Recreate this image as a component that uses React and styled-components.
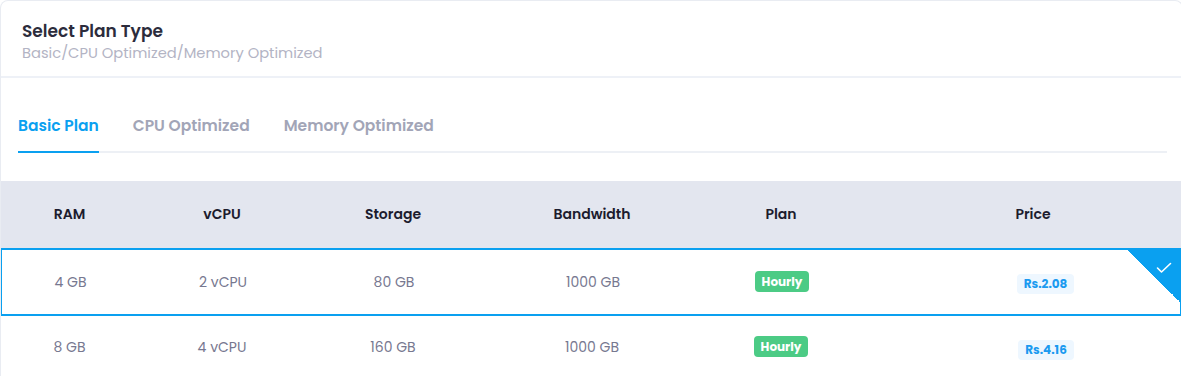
import React, { useState } from "react";
import styled, { createGlobalStyle } from "styled-components";

const GlobalStyle = createGlobalStyle`
  html, body { margin: 0; padding: 0; background: #ffffff; overflow: hidden; }
  body { font-family: "Poppins", "Open Sans", "Noto Sans", sans-serif; }
  * { box-sizing: border-box; }
`;

const Card = styled.section`
  width: calc(100% + 2px);
  background: #ffffff;
  border: 1px solid #e9ecf2;
  border-bottom: none;
  border-radius: 8px 8px 0 0;
  overflow: hidden;
`;

const Header = styled.header`
  padding: 18px 22px 13px 21px;
  border-bottom: 2px solid #eef1f7;
`;

const Title = styled.h2`
  margin: 0;
  font-size: 17px;
  line-height: 24px;
  font-weight: 600;
  color: #2c2c3c;
`;

const Subtitle = styled.p`
  margin: 0;
  font-size: 14.7px;
  line-height: 20px;
  font-weight: 400;
  color: #b3b4c4;
`;

const Body = styled.div`
  padding-top: 37px;
`;

const Tabs = styled.nav`
  display: flex;
  gap: 34px;
  margin: 0 15px 28px 17px;
  border-bottom: 2px solid #edf0f5;
`;

const Tab = styled.button`
  appearance: none;
  background: none;
  border: none;
  padding: 0 0 14px;
  margin-bottom: -2px;
  font-family: inherit;
  font-size: 15.5px;
  line-height: 22px;
  font-weight: 600;
  cursor: pointer;
  color: ${(p) => (p.$active ? "#0aa0f0" : "#a2a5b7")};
  border-bottom: 2px solid ${(p) => (p.$active ? "#0aa0f0" : "transparent")};
`;

const COLS = "137px 168px 174px 224px 154px 1fr";

const HeadRow = styled.div`
  display: grid;
  grid-template-columns: ${COLS};
  height: 67px;
  align-items: center;
  background: #e3e6ef;
`;

const HeadCell = styled.div`
  text-align: center;
  font-size: 14px;
  font-weight: 600;
  color: #1c1c2e;
  padding-left: ${(p) => (p.$last ? "26px" : "0")};
`;

const Row = styled.div`
  position: relative;
  display: grid;
  grid-template-columns: ${COLS};
  align-items: center;
  height: ${(p) => (p.$selected ? "68px" : "63px")};
  border: ${(p) => (p.$selected ? "2px solid #0aa0f0" : "none")};
  border-left: ${(p) => (p.$selected ? "2px solid #0aa0f0" : "1px solid #e8ebf1")};
  border-bottom: ${(p) => (p.$selected ? "2px solid #0aa0f0" : "1px solid #eef0f5")};
  margin-left: -1px;
  cursor: pointer;
`;

const Cell = styled.div`
  text-align: center;
  font-size: 14px;
  font-weight: 400;
  color: #777890;
`;

const PriceCell = styled.div`
  display: flex;
  justify-content: center;
  padding: 24px 0 0 52px;
  align-self: stretch;
`;

const Badge = styled.span`
  display: inline-flex;
  align-items: center;
  justify-content: center;
  height: ${(p) => (p.$tone === "green" ? "21px" : "20px")};
  padding: 0 7px;
  border-radius: 4px;
  font-size: 12px;
  font-weight: 700;
  line-height: 1;
  background: ${(p) => (p.$tone === "green" ? "#4ccb85" : "#eef7ff")};
  color: ${(p) => (p.$tone === "green" ? "#ffffff" : "#1b9af0")};
`;

const PlanCell = styled.div`
  display: flex;
  justify-content: center;
  margin-top: -1px;
`;

const Corner = styled.div`
  position: absolute;
  top: 0;
  right: 0;
  width: 52px;
  height: 52px;
  background: linear-gradient(to bottom left, #0aa0f0 50%, transparent 50%);
  pointer-events: none;
`;

const CheckIcon = styled.svg`
  position: absolute;
  top: 12px;
  right: 8px;
`;

const plans = [
  { ram: "4 GB", cpu: "2 vCPU", storage: "80 GB", bw: "1000 GB", plan: "Hourly", price: "Rs.2.08" },
  { ram: "8 GB", cpu: "4 vCPU", storage: "160 GB", bw: "1000 GB", plan: "Hourly", price: "Rs.4.16" },
];

const tabs = ["Basic Plan", "CPU Optimized", "Memory Optimized"];

export default function App() {
  const [tab, setTab] = useState(0);
  const [selected, setSelected] = useState(0);
  return (
    <>
      <GlobalStyle />
      <Card>
        <Header>
          <Title>Select Plan Type</Title>
          <Subtitle>Basic/CPU Optimized/Memory Optimized</Subtitle>
        </Header>
        <Body>
          <Tabs>
            {tabs.map((t, i) => (
              <Tab key={t} $active={i === tab} onClick={() => setTab(i)}>
                {t}
              </Tab>
            ))}
          </Tabs>
          <HeadRow>
            <HeadCell>RAM</HeadCell>
            <HeadCell>vCPU</HeadCell>
            <HeadCell>Storage</HeadCell>
            <HeadCell>Bandwidth</HeadCell>
            <HeadCell>Plan</HeadCell>
            <HeadCell $last>Price</HeadCell>
          </HeadRow>
          {plans.map((p, i) => (
            <Row key={i} $selected={i === selected} onClick={() => setSelected(i)}>
              <Cell>{p.ram}</Cell>
              <Cell>{p.cpu}</Cell>
              <Cell>{p.storage}</Cell>
              <Cell>{p.bw}</Cell>
              <PlanCell>
                <Badge $tone="green">{p.plan}</Badge>
              </PlanCell>
              <PriceCell>
                <Badge $tone="blue">{p.price}</Badge>
              </PriceCell>
              {i === selected && (
                <Corner>
                  <CheckIcon width="16" height="12" viewBox="0 0 16 12" fill="none">
                    <path d="M1.5 6 L5.5 10 L14.5 1.5" stroke="#ffffff" strokeWidth="1.6" strokeLinecap="round" strokeLinejoin="round" />
                  </CheckIcon>
                </Corner>
              )}
            </Row>
          ))}
        </Body>
      </Card>
    </>
  );
}
